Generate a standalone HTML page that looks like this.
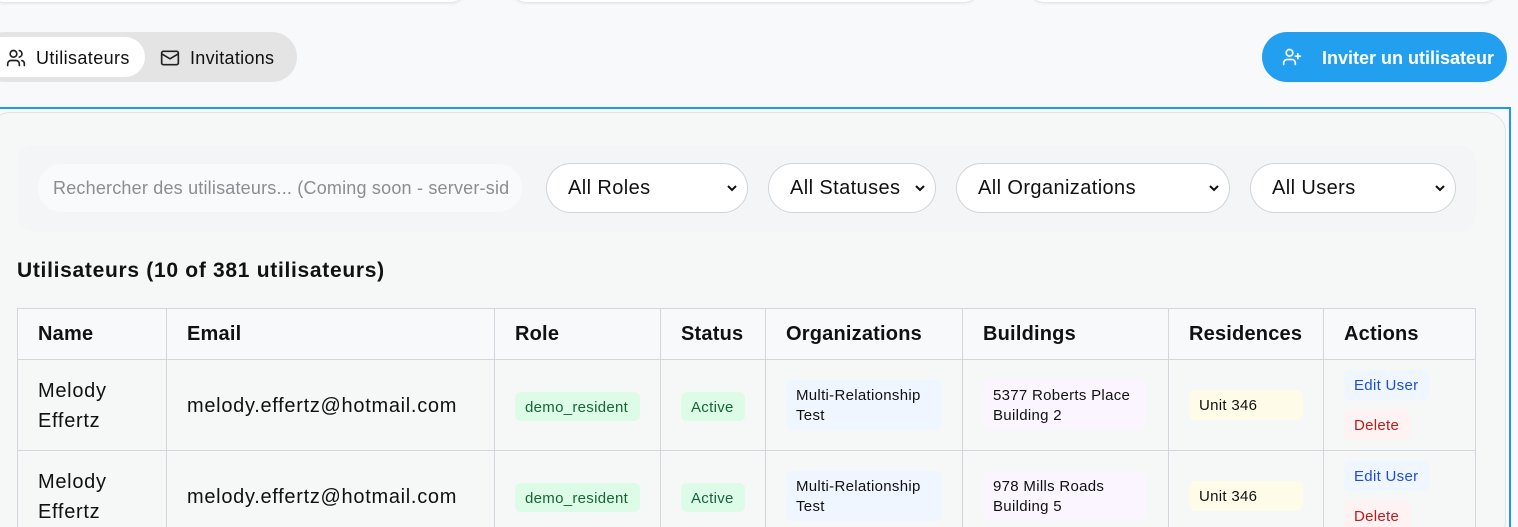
<!DOCTYPE html>
<html><head><meta charset="utf-8"><style>
*{box-sizing:border-box;margin:0;padding:0}
html,body{width:1518px;height:527px;overflow:hidden}
body{background:#f8f9fb;font-family:"Liberation Sans",sans-serif;color:#111;position:relative}
.a{position:absolute}
.topcard{position:absolute;top:-40px;height:42px;background:#fff;border-radius:0 0 14px 14px;box-shadow:0 1px 3px rgba(0,0,0,.12)}
.sel{position:absolute;top:163px;height:50px;background:#fff;border:1px solid #d0d3d8;border-radius:25px;font-size:20px;padding:13px 0 0 21px;color:#111;letter-spacing:.4px}
.sel svg{position:absolute;right:9px;top:19px}
.hd{position:absolute;top:308px;height:51px;font-size:20px;font-weight:bold;padding-top:15px;letter-spacing:.2px}
.vl{position:absolute;top:308px;width:1px;height:230px;background:#d4d6de}
.hl{position:absolute;left:17px;width:1459px;height:1px;background:#d4d6de}
.t20{font-size:20px;line-height:30px;letter-spacing:.7px}
.b{position:absolute;font-size:15px;border-radius:6px;letter-spacing:.3px}
</style></head><body>
<div class="topcard" style="left:-10px;width:475px"></div>
<div class="topcard" style="left:512px;width:466px"></div>
<div class="topcard" style="left:1030px;width:467px"></div>

<div class="a" style="left:-20px;top:32px;width:317px;height:50px;background:#e4e4e4;border-radius:25px"></div>
<div class="a" style="left:-20px;top:37px;width:165px;height:40px;background:#fff;border-radius:20px"></div>
<svg class="a" style="left:6px;top:48px" width="20" height="20" viewBox="0 0 24 24" fill="none" stroke="#222" stroke-width="2" stroke-linecap="round"><circle cx="9" cy="7" r="4"/><path d="M2 21v-2a4 4 0 0 1 4-4h6a4 4 0 0 1 4 4v2M16 3.1a4 4 0 0 1 0 7.8M22 21v-2a4 4 0 0 0-3-3.9"/></svg>
<div class="a" style="left:36px;top:48px;font-size:18px;letter-spacing:.4px">Utilisateurs</div>
<svg class="a" style="left:160px;top:48px" width="20" height="20" viewBox="0 0 24 24" fill="none" stroke="#222" stroke-width="2" stroke-linejoin="round"><rect x="2" y="4" width="20" height="16" rx="2"/><path d="M22 7l-10 6L2 7"/></svg>
<div class="a" style="left:190px;top:48px;font-size:18px;letter-spacing:.3px">Invitations</div>

<div class="a" style="left:1262px;top:32px;width:245px;height:50px;background:#229fef;border-radius:25px"></div>
<svg class="a" style="left:1282px;top:47px" width="20" height="20" viewBox="0 0 24 24" fill="none" stroke="#fff" stroke-width="2" stroke-linecap="round"><circle cx="9" cy="7" r="4"/><path d="M2 21v-2a4 4 0 0 1 4-4h6a4 4 0 0 1 4 4v2M19 8v6M22 11h-6"/></svg>
<div class="a" style="left:1322px;top:48px;font-size:18px;font-weight:bold;color:#fff">Inviter un utilisateur</div>

<div class="a" style="left:0;top:107px;width:1511px;height:430px;border-top:2px solid #2196f3;border-right:2px solid #2196f3"></div>
<div class="a" style="left:-10px;top:112px;width:1516px;height:430px;background:#f6f7f7;border:1px solid #e0e3e7;border-radius:20px"></div>

<div class="a" style="left:17px;top:145px;width:1459px;height:87px;background:#f3f5f7;border-radius:16px"></div>
<div class="a" style="left:38px;top:164px;width:484px;height:48px;background:#f9fafb;border-radius:24px;font-size:18px;letter-spacing:.2px;color:#8a8d92;padding:14px 0 0 15px;white-space:nowrap;overflow:hidden">Rechercher des utilisateurs... (Coming soon - server-sid</div>
<div class="sel" style="left:546px;width:202px">All Roles<svg width="12" height="10" viewBox="0 0 12 10"><path d="M2 3l4 4 4-4" fill="none" stroke="#111" stroke-width="2"/></svg></div>
<div class="sel" style="left:768px;width:168px">All Statuses<svg width="12" height="10" viewBox="0 0 12 10"><path d="M2 3l4 4 4-4" fill="none" stroke="#111" stroke-width="2"/></svg></div>
<div class="sel" style="left:956px;width:274px">All Organizations<svg width="12" height="10" viewBox="0 0 12 10"><path d="M2 3l4 4 4-4" fill="none" stroke="#111" stroke-width="2"/></svg></div>
<div class="sel" style="left:1250px;width:206px">All Users<svg width="12" height="10" viewBox="0 0 12 10"><path d="M2 3l4 4 4-4" fill="none" stroke="#111" stroke-width="2"/></svg></div>

<div class="a" style="left:17px;top:259px;font-size:21px;font-weight:bold;letter-spacing:.7px">Utilisateurs (10 of 381 utilisateurs)</div>

<div class="a" style="left:17px;top:308px;width:1459px;height:51px;background:#f8f9fb"></div>
<div class="hl" style="top:308px"></div><div class="hl" style="top:359px"></div><div class="hl" style="top:450px"></div>
<div class="vl" style="left:17px"></div><div class="vl" style="left:166px"></div><div class="vl" style="left:494px"></div><div class="vl" style="left:660px"></div><div class="vl" style="left:765px"></div><div class="vl" style="left:962px"></div><div class="vl" style="left:1168px"></div><div class="vl" style="left:1323px"></div><div class="vl" style="left:1475px"></div>
<div class="hd" style="left:38px">Name</div><div class="hd" style="left:187px">Email</div><div class="hd" style="left:515px">Role</div><div class="hd" style="left:681px">Status</div><div class="hd" style="left:786px">Organizations</div><div class="hd" style="left:983px">Buildings</div><div class="hd" style="left:1189px">Residences</div><div class="hd" style="left:1344px">Actions</div>

<!-- row 1 -->
<div class="a t20" style="left:38px;top:376px">Melody<br>Effertz</div>
<div class="a t20" style="left:187px;top:391px">melody.effertz@hotmail.com</div>
<div class="b" style="left:515px;top:392px;width:125px;height:29px;background:#dcfce7;color:#166534;padding:7px 0 0 10px">demo_resident</div>
<div class="b" style="left:681px;top:392px;width:64px;height:29px;background:#dcfce7;color:#166534;padding:7px 0 0 10px">Active</div>
<div class="b" style="left:786px;top:380px;width:156px;height:50px;background:#eff6ff;padding:6px 0 0 10px;line-height:20px">Multi-Relationship<br>Test</div>
<div class="b" style="left:983px;top:380px;width:163px;height:50px;background:#faf5ff;padding:6px 0 0 10px;line-height:20px">5377 Roberts Place<br>Building 2</div>
<div class="b" style="left:1189px;top:390px;width:114px;height:30px;background:#fefce8;padding:7px 0 0 10px">Unit 346</div>
<div class="b" style="left:1344px;top:370px;width:85px;height:30px;background:#eff6ff;color:#1d4ed8;padding:7px 0 0 10px">Edit User</div>
<div class="b" style="left:1344px;top:410px;width:66px;height:30px;background:#fef2f2;color:#b91c1c;padding:7px 0 0 10px">Delete</div>

<!-- row 2 -->
<div class="a t20" style="left:38px;top:467px">Melody<br>Effertz</div>
<div class="a t20" style="left:187px;top:482px">melody.effertz@hotmail.com</div>
<div class="b" style="left:515px;top:483px;width:125px;height:29px;background:#dcfce7;color:#166534;padding:7px 0 0 10px">demo_resident</div>
<div class="b" style="left:681px;top:483px;width:64px;height:29px;background:#dcfce7;color:#166534;padding:7px 0 0 10px">Active</div>
<div class="b" style="left:786px;top:471px;width:156px;height:50px;background:#eff6ff;padding:6px 0 0 10px;line-height:20px">Multi-Relationship<br>Test</div>
<div class="b" style="left:983px;top:471px;width:163px;height:50px;background:#faf5ff;padding:6px 0 0 10px;line-height:20px">978 Mills Roads<br>Building 5</div>
<div class="b" style="left:1189px;top:481px;width:114px;height:30px;background:#fefce8;padding:7px 0 0 10px">Unit 346</div>
<div class="b" style="left:1344px;top:461px;width:85px;height:30px;background:#eff6ff;color:#1d4ed8;padding:7px 0 0 10px">Edit User</div>
<div class="b" style="left:1344px;top:501px;width:66px;height:30px;background:#fef2f2;color:#b91c1c;padding:7px 0 0 10px">Delete</div>
</body></html>
